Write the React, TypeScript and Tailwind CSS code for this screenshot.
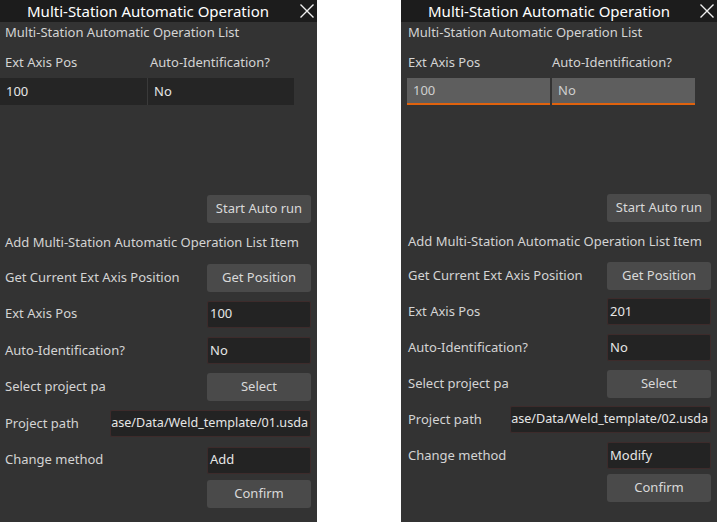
import { ReactNode } from "react";

type PanelProps = {
  selected?: boolean;
  extAxis: string;
  path: string;
  method: string;
  variant: "left" | "right";
};

const Button = ({ children }: { children: ReactNode }) => (
  <div className="w-[104px] h-[28px] rounded-[3px] bg-[#4a4a4a] text-[#d9d9d9] text-[13px] flex items-center justify-center">
    {children}
  </div>
);

const Field = ({ children, wide }: { children: ReactNode; wide?: boolean }) => (
  <div
    className={`${
      wide ? "w-[201px] justify-end pr-[2px] text-[12.6px]" : "w-[104px] pl-[2px] text-[13px]"
    } h-[27px] rounded-[2px] bg-[#232323] border border-[#3d2b2b] text-[#e6e6e6] flex items-center overflow-hidden whitespace-nowrap`}
  >
    {children}
  </div>
);

const Row = ({ label, children }: { label: string; children: ReactNode }) => (
  <div className="flex items-center justify-between h-[27px]">
    <span className="whitespace-nowrap">{label}</span>
    {children}
  </div>
);

const Panel = ({ selected, extAxis, path, method, variant }: PanelProps) => {
  const left = variant === "left";
  return (
    <div
      className={`${
        left ? "w-[317px]" : "w-[316px]"
      } h-[522px] bg-[#333333] text-[#d4d4d4] text-[13px] flex flex-col`}
    >
      <div className="h-[22px] bg-[#1c1c1c] relative flex items-center justify-center text-white text-[15px]">
        <span className={left ? "-ml-[21px]" : "-ml-[20px]"}>
          Multi-Station Automatic Operation
        </span>
        <svg
          className="absolute right-[2px] top-[3px]"
          width="16"
          height="16"
          viewBox="0 0 16 16"
        >
          <path d="M1.5 1.5 L14.5 14.5 M14.5 1.5 L1.5 14.5" stroke="#f0f0f0" strokeWidth="1.4" />
        </svg>
      </div>

      <div className={`${left ? "pl-[5px]" : "pl-[7px]"} h-[22px] flex items-center`}>
        Multi-Station Automatic Operation List
      </div>

      <div className={`${left ? "pl-[5px]" : "pl-[7px]"} mt-[8px] h-[22px] flex items-center`}>
        <span className={left ? "w-[145px]" : "w-[144px]"}>Ext Axis Pos</span>
        <span>Auto-Identification?</span>
      </div>

      <div
        className={`${left ? "ml-0 w-[294px]" : "ml-[6px] w-[288px]"} mt-[4px] h-[27px] flex`}
      >
        {["100", "No"].map((v, i) => (
          <div
            key={v}
            className={`h-full flex items-center pl-[6px] ${
              i === 0 ? (left ? "w-[148px]" : "w-[143px]") : "flex-1"
            } ${
              selected
                ? "bg-[#5e5e5e] text-[#cfcfcf] border-b-2 border-[#e0620d]"
                : "bg-[#252525] text-[#e6e6e6]"
            } ${i === 0 ? (selected ? "mr-[2px]" : "border-r border-[#3a3a3a]") : ""}`}
          >
            {v}
          </div>
        ))}
      </div>

      <div
        className={`${left ? "pl-[5px] pr-[6px]" : "pl-[7px] pr-[6px]"} flex flex-col ${
          left ? "mt-[90px]" : "mt-[89px]"
        }`}
      >
        <div className="flex justify-end">
          <Button>Start Auto run</Button>
        </div>
        <div className="h-[22px] mt-[9px] flex items-center whitespace-nowrap">
          Add Multi-Station Automatic Operation List Item
        </div>
        <div className={`flex flex-col ${left ? "gap-[9.5px] mt-[10px]" : "gap-[9px] mt-[9px]"}`}>
          <Row label="Get Current Ext Axis Position">
            <Button>Get Position</Button>
          </Row>
          <Row label="Ext Axis Pos">
            <Field>{extAxis}</Field>
          </Row>
          <Row label="Auto-Identification?">
            <Field>No</Field>
          </Row>
          <Row label="Select project pa">
            <Button>Select</Button>
          </Row>
          <Row label="Project path">
            <Field wide>{path}</Field>
          </Row>
          <Row label="Change method">
            <Field>{method}</Field>
          </Row>
        </div>
        <div className={`flex justify-end ${left ? "mt-[6px]" : "mt-[5px]"}`}>
          <Button>Confirm</Button>
        </div>
      </div>
    </div>
  );
};

const App = () => {
  return (
    <div
      className="w-[717px] h-[522px] bg-white flex justify-between overflow-hidden"
      style={{ fontFamily: '"Noto Sans", "Open Sans", sans-serif' }}
    >
      <Panel
        variant="left"
        extAxis="100"
        path="ase/Data/Weld_template/01.usda"
        method="Add"
      />
      <Panel
        variant="right"
        selected
        extAxis="201"
        path="ase/Data/Weld_template/02.usda"
        method="Modify"
      />
    </div>
  );
};

export default App;
